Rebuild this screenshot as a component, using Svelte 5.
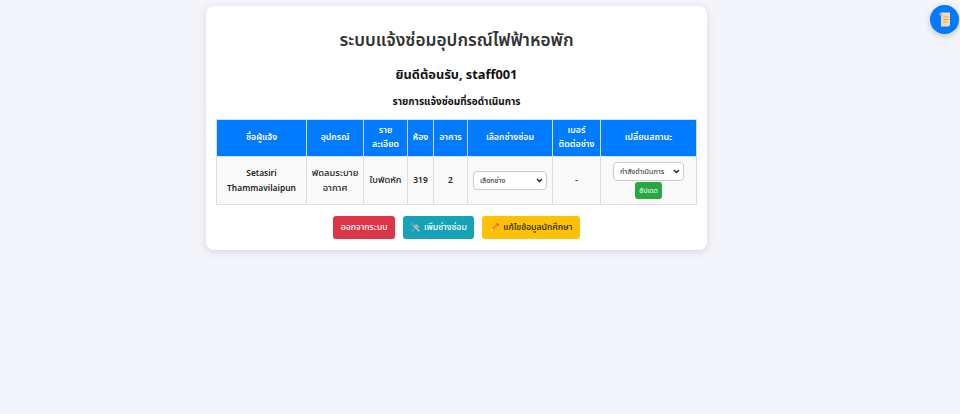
<script>
  const statuses = ['กำลังดำเนินการ', 'เสร็จสิ้น'];
  const repairs = [
    {
      name: 'Setasiri Thammavilaipun',
      device: 'พัดลมระบายอากาศ',
      detail: 'ใบพัดหัก',
      room: '319',
      building: '2',
      phone: '-'
    }
  ];
</script>

<button class="float" aria-label="บันทึก">
  <svg width="12" height="15" viewBox="0 0 12 15">
    <path d="M2 0.5h9v12a2 2 0 0 1-2 2H2z" fill="#f5dcae" />
    <path d="M0.5 2a1.5 1.5 0 0 1 1.5-1.5h1v3H0.5z" fill="#dca766" />
    <path d="M4 5h5.5M4 7.5h5.5M4 10h4" stroke="#e0a55c" stroke-width="1" />
  </svg>
</button>

<div class="page">
  <div class="card">
    <h1>ระบบแจ้งซ่อมอุปกรณ์ไฟฟ้าหอพัก</h1>
    <h2>ยินดีต้อนรับ, staff001</h2>
    <h3>รายการแจ้งซ่อมที่รอดำเนินการ</h3>

    <table>
      <colgroup>
        <col style="width: 90px" />
        <col style="width: 57px" />
        <col style="width: 44px" />
        <col style="width: 26px" />
        <col style="width: 34px" />
        <col style="width: 85px" />
        <col style="width: 48px" />
        <col style="width: 96px" />
      </colgroup>
      <thead>
        <tr>
          <th>ชื่อผู้แจ้ง</th>
          <th>อุปกรณ์</th>
          <th>ราย<br />ละเอียด</th>
          <th>ห้อง</th>
          <th>อาคาร</th>
          <th>เลือกช่างซ่อม</th>
          <th>เบอร์<br />ติดต่อช่าง</th>
          <th>เปลี่ยนสถานะ</th>
        </tr>
      </thead>
      <tbody>
        {#each repairs as r}
          <tr>
            <td class="name">{r.name}</td>
            <td>{r.device}</td>
            <td>{r.detail}</td>
            <td class="name">{r.room}</td>
            <td class="name">{r.building}</td>
            <td>
              <select class="tech">
                <option>เลือกช่าง</option>
              </select>
            </td>
            <td>{r.phone}</td>
            <td>
              <select class="status">
                {#each statuses as s}
                  <option>{s}</option>
                {/each}
              </select>
              <button class="update">อัปเดต</button>
            </td>
          </tr>
        {/each}
      </tbody>
    </table>

    <div class="actions">
      <button class="btn red">ออกจากระบบ</button>
      <button class="btn teal">
        <svg width="11" height="11" viewBox="0 0 13 13">
          <path d="M2 11l6-6" stroke="#8a97a3" stroke-width="2" />
          <path d="M7 2l4 4-2 1-3-3z" fill="#aab4bd" />
          <path d="M11 11L4 4" stroke="#c4ccd3" stroke-width="1.6" />
          <path d="M1 1l3 1v2H2z" fill="#8a97a3" />
        </svg>
        เพิ่มช่างซ่อม
      </button>
      <button class="btn yellow">
        <svg width="11" height="11" viewBox="0 0 12 12">
          <path d="M3 7l5-5 2 2-5 5z" fill="#f0902f" />
          <path d="M8 2l1-1 2 2-1 1z" fill="#e0455a" />
          <path d="M3 7l2 2-3 1z" fill="#f6d6a8" />
        </svg>
        แก้ไขข้อมูลนักศึกษา
      </button>
    </div>
  </div>
</div>

<style>
  :global(body) {
    background: #f4f4fb;
    font-family: "Noto Sans Thai", "Noto Sans", sans-serif;
  }

  .page {
    display: flex;
    justify-content: center;
    padding: 6px 47px 0 0;
    min-height: 408px;
  }

  .card {
    width: 481px;
    height: 224px;
    padding: 10px;
    background: #fff;
    border-radius: 8px;
    box-shadow: 0 2px 8px rgba(0, 0, 0, 0.12);
    text-align: center;
    color: #222;
  }

  h1 {
    margin: 13px 0 0;
    font-size: 17.3px;
    line-height: 24px;
    font-weight: 600;
    color: #333;
  }

  h2 {
    margin: 12px 0 0;
    font-size: 12.8px;
    line-height: 20px;
    font-weight: 700;
    color: #111;
  }

  h3 {
    margin: 7px 0 0;
    font-size: 10px;
    line-height: 20px;
    font-weight: 700;
    color: #111;
  }

  table {
    width: 480px;
    margin-top: 7px;
    table-layout: fixed;
    border-collapse: collapse;
    font-size: 8.8px;
  }

  th {
    height: 36px;
    padding: 0 3px;
    background: #007bff;
    color: #fff;
    border: 1px solid #ddd;
    font-weight: 600;
    line-height: 14px;
  }

  td {
    height: 47px;
    padding: 0 3px;
    background: #f9f9f9;
    border: 1px solid #ddd;
    font-size: 9.3px;
    font-weight: 500;
    line-height: 15px;
    color: #222;
  }

  td.name {
    font-size: 8.4px;
    font-weight: 600;
  }

  select {
    appearance: none;
    padding: 0 0 0 6px;
    font-family: inherit;
    background: #fff url("data:image/svg+xml,%3Csvg xmlns='http://www.w3.org/2000/svg' width='7' height='5'%3E%3Cpath d='M1 1l2.5 2.5L6 1' fill='none' stroke='%23222' stroke-width='1.4'/%3E%3C/svg%3E") no-repeat right 3px center;
    border: 1px solid #ccc;
    border-radius: 4px;
    color: #222;
  }

  .tech {
    width: 74px;
    height: 19px;
    font-size: 7.2px;
  }

  .status {
    display: block;
    width: 71px;
    height: 19px;
    margin: 0 auto;
    font-size: 7.2px;
  }

  .update {
    margin-top: 1px;
    padding: 0 4px;
    height: 17px;
    font-family: inherit;
    font-size: 6.8px;
    color: #fff;
    background: #28a745;
    border: 0;
    border-radius: 3px;
  }

  .actions {
    display: flex;
    justify-content: center;
    gap: 7.5px;
    margin-top: 11px;
  }

  .btn {
    height: 23px;
    padding: 0 7.5px;
    display: flex;
    align-items: center;
    gap: 3px;
    font-family: inherit;
    font-size: 8.7px;
    font-weight: 500;
    border: 0;
    border-radius: 3px;
    color: #fff;
  }

  .red {
    background: #dc3545;
  }

  .teal {
    background: #17a2b8;
  }

  .yellow {
    background: #ffc107;
    color: #222;
  }

  .float {
    position: fixed;
    top: 5px;
    right: 1px;
    width: 29px;
    height: 29px;
    padding: 0;
    display: flex;
    align-items: center;
    justify-content: center;
    background: #007bff;
    border: 0;
    border-radius: 50%;
    box-shadow: 0 2px 6px rgba(0, 0, 0, 0.2);
  }
</style>
